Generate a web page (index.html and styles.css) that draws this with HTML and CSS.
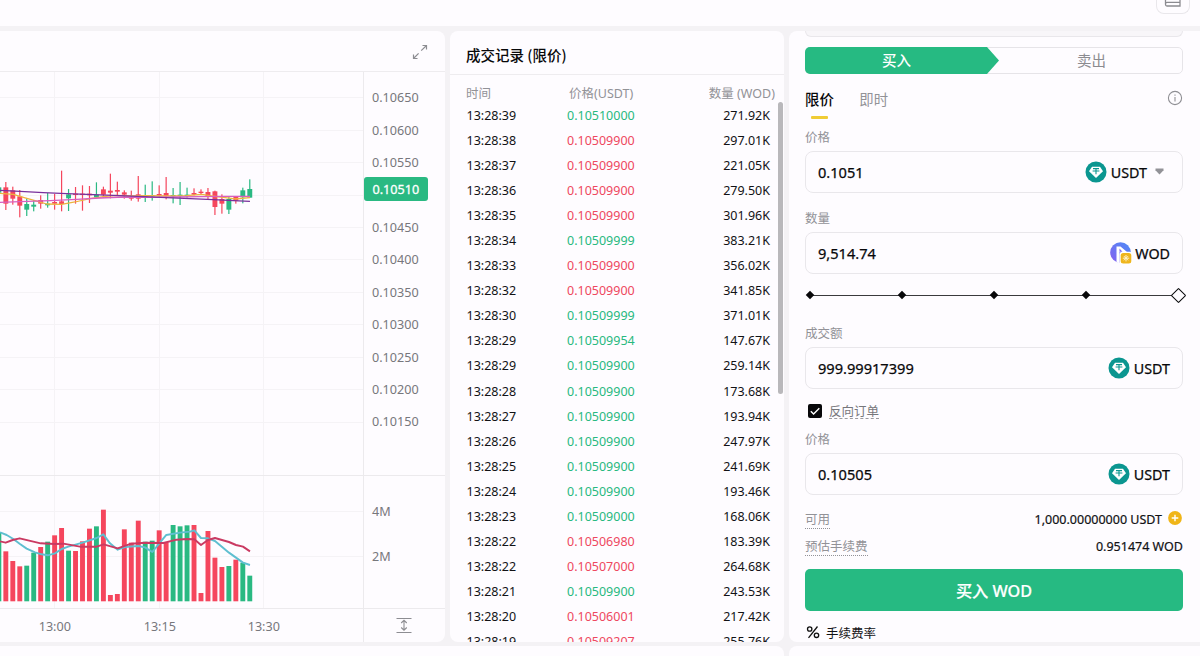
FILE: index.html
```html
<!DOCTYPE html>
<html lang="zh-CN">
<head>
    <meta charset="UTF-8">
    <meta name="viewport" content="width=device-width, initial-scale=1.0">
    <title>WOD/USDT</title>
    <link rel="stylesheet" href="styles.css">
</head>
<body>
    <svg class="defs" width="0" height="0">
        <symbol id="tether" viewBox="0 0 22 22">
            <circle cx="11" cy="11" r="10.5" fill="#0b9690"/>
            <path d="M7 5.7h8l3 4.5-7 6.7-7-6.7z" fill="#fff"/>
            <path d="M8 7.6h6M11 7.6v5.6M7.6 10h6.8" stroke="#0b9690" stroke-width="1.1" fill="none"/>
        </symbol>
    </svg>

    <header class="topbar">
        <div class="layout-button">
            <svg width="18" height="12" viewBox="0 0 18 12" fill="none" stroke="#8b8b90" stroke-width="1.3">
                <path d="M1.5 0v9.5q0 1.5 1.5 1.5h13V0M1.5 9q0-1.6 1.5-1.6h13"/>
            </svg>
        </div>
    </header>

    <main class="panels">
        <section class="panel chart-panel">
            <div class="chart-header">
                <svg width="16" height="16" viewBox="0 0 16 16" fill="none" stroke="#8d8d92" stroke-width="1.2">
                    <path d="M9.2 6.6 14.5 1.5M10.5 1.5h4v4M6.6 9.4 1.5 14.5M1.5 10.5v4h4"/>
                </svg>
            </div>
            <svg id="chart" class="chart" width="445" height="570" viewBox="0 72 445 570"></svg>
        </section>

        <section class="panel trades-panel">
            <h2>成交记录 (限价)</h2>
            <div class="trades-head">
                <span>时间</span>
                <span>价格(USDT)</span>
                <span>数量 (WOD)</span>
            </div>
            <div class="trades-body">
                <div id="trades" class="trades"></div>
                <div class="scrollbar"></div>
            </div>
        </section>

        <section class="panel order-panel">
            <div class="previous-field"></div>
            <div class="side-switch">
                <div class="side-buy">买入</div>
                <div class="side-sell">卖出</div>
            </div>
            <div class="tabs">
                <span class="tab active">限价</span>
                <span class="tab">即时</span>
                <svg class="info" width="16" height="16" viewBox="0 0 16 16" fill="none" stroke="#8f8f94" stroke-width="1.1">
                    <circle cx="8" cy="8" r="6.6"/>
                    <path d="M8 7v4.4M8 4.5v1.3"/>
                </svg>
            </div>

            <div class="label first">价格</div>
            <div class="field">
                <span class="value">0.1051</span>
                <svg class="coin" width="22" height="22"><use href="#tether"/></svg>
                <span class="unit">USDT</span>
                <svg class="caret" width="9" height="7" viewBox="0 0 9 7"><path d="M.5 .5h8v1.7L4.5 6.5 .5 2.2z" fill="#929297"/></svg>
            </div>

            <div class="label">数量</div>
            <div class="field">
                <span class="value">9,514.74</span>
                <svg class="coin wod" width="22" height="22" viewBox="0 0 22 22">
                    <defs>
                        <linearGradient id="wodFill" x1="1" y1="0" x2="0" y2="1">
                            <stop offset="0" stop-color="#4b8cf6"/>
                            <stop offset="1" stop-color="#8760ef"/>
                        </linearGradient>
                    </defs>
                    <circle cx="10.5" cy="10.5" r="10.3" fill="url(#wodFill)"/>
                    <path d="M6.5 4.5h4l6.5 5.5H9.5v11.5L6.500 20z" fill="#fff"/>
                    <path d="M9.5 6.500 12.5 9.700H9.5z" fill="#7a68f0"/>
                    <rect x="9.5" y="9.7" width="13" height="13" rx="3" fill="#fff"/>
                    <rect x="10.7" y="10.9" width="10.6" height="10.6" rx="2.5" fill="#efb51d"/>
                    <path d="M16 13v6.4M12.8 16.2h6.4M13.9 14.1l4.2 4.2M18.1 14.1l-4.2 4.2" stroke="#fff2c9" stroke-width="1"/>
                </svg>
                <span class="unit">WOD</span>
            </div>

            <div class="slider">
                <i></i><i></i><i></i><i></i><i class="handle"></i>
            </div>

            <div class="label amount">成交额</div>
            <div class="field">
                <span class="value">999.99917399</span>
                <svg class="coin" width="22" height="22"><use href="#tether"/></svg>
                <span class="unit">USDT</span>
            </div>

            <div class="check-row">
                <svg width="14" height="14" viewBox="0 0 14 14">
                    <rect width="14" height="14" rx="2" fill="#08080a"/>
                    <path d="M2.8 7.2 5.6 10 11.3 4.3" fill="none" stroke="#fff" stroke-width="1.4"/>
                </svg>
                <span>反向订单</span>
            </div>

            <div class="label reverse">价格</div>
            <div class="field">
                <span class="value">0.10505</span>
                <svg class="coin" width="22" height="22"><use href="#tether"/></svg>
                <span class="unit">USDT</span>
            </div>

            <div class="summary available">
                <span class="hint">可用</span>
                <span class="sum">1,000.00000000 USDT</span>
                <svg width="14" height="14" viewBox="0 0 14 14">
                    <circle cx="7" cy="7" r="6.9" fill="#f0b518"/>
                    <path d="M7 3.7v6.6M3.7 7h6.6" stroke="#fff" stroke-width="1.4"/>
                </svg>
            </div>
            <div class="summary fee">
                <span class="hint">预估手续费</span>
                <span class="sum">0.951474 WOD</span>
            </div>

            <button class="submit">买入 WOD</button>

            <div class="rate">
                <svg width="14" height="14" viewBox="0 0 14 14" fill="none" stroke="#111" stroke-width="1.3">
                    <circle cx="3.7" cy="4" r="2.2"/>
                    <circle cx="10.5" cy="10.3" r="2.2"/>
                    <path d="M11.5 1.5 2.5 12.8"/>
                </svg>
                <span>手续费率</span>
            </div>
        </section>
    </main>

    <footer class="next-panels">
        <div class="next-left"></div>
        <div class="next-right"></div>
    </footer>

    <script src="script.js"></script>
</body>
</html>
```

FILE: styles.css
```css
* {
    box-sizing: border-box;
}
body {
    margin: 0;
    height: 656px;
    overflow: hidden;
    background-color: #f4f2f5;
    color: #121215;
    font-family: "Noto Sans", "Noto Sans CJK SC", sans-serif;
    font-size: 12.5px;
}
svg {
    display: block;
    flex-shrink: 0;
}
.defs {
    position: absolute;
}
.topbar {
    height: 26px;
    margin-bottom: 5px;
    padding-right: 10px;
    display: flex;
    justify-content: flex-end;
    background: #fefcff;
}
.layout-button {
    width: 34px;
    height: 14px;
    border: 1px solid #e9e7eb;
    border-top: none;
    border-radius: 0 0 8px 8px;
    display: flex;
    justify-content: center;
}
.layout-button svg {
    margin-top: -5px;
}
.panels {
    display: grid;
    grid-template-columns: 445px 334px 420px;
    column-gap: 5px;
    height: 611px;
}
.panel {
    height: 611px;
    overflow: hidden;
    background: #fefcff;
    border-radius: 8px;
}

/* chart */
.chart-panel {
    border-radius: 0 8px 8px 0;
}
.chart-header {
    height: 41px;
    padding: 13px 17px 0 0;
    display: flex;
    justify-content: flex-end;
    border-bottom: 1px solid #eeecef;
}
.chart text {
    font-size: 12.6px;
    fill: #77777c;
}
.chart .current {
    fill: #fff;
    stroke: #fff;
    stroke-width: 0.3px;
}
.grid-line {
    stroke: #f5f3f6;
}
.frame-line {
    stroke: #eceaed;
}
.up {
    fill: #2ab982;
}
.down {
    fill: #f5465d;
}
.line {
    fill: none;
    stroke-linejoin: round;
}

/* trades */
.trades-panel {
    display: flex;
    flex-direction: column;
}
h2 {
    margin: 0;
    height: 44px;
    padding: 2px 16px 0;
    line-height: 43px;
    border-bottom: 1px solid #eeecef;
    font-family: "Noto Sans CJK SC", sans-serif;
    font-size: 14.5px;
    font-weight: 500;
    color: #08080a;
}
.trades-head {
    height: 28px;
    padding: 9px 9px 0 16px;
    line-height: 20px;
    display: grid;
    grid-template-columns: 100px 90px 1fr;
    color: #929297;
}
.trades-head span:nth-child(2) {
    padding-left: 3px;
}
.trades-head span:last-child {
    text-align: right;
}
.trades-body {
    flex: 1;
    min-height: 0;
    display: flex;
}
.trades {
    flex: 1;
}
.trade {
    height: 25.06px;
    line-height: 25.4px;
    padding: 0 9px 0 16.5px;
    display: grid;
    grid-template-columns: 100.5px 90px 1fr;
}
.trade span:last-child {
    text-align: right;
}
.price-up {
    color: #28b980;
}
.price-down {
    color: #ee4860;
}
.scrollbar {
    width: 5px;
    height: 292px;
    margin: -1px 1px 0 -1px;
    border-radius: 3px;
    background: #b9b8bb;
}

/* order form */
.order-panel {
    padding: 0 26px 0 16px;
}
.previous-field {
    height: 6px;
    border: 1px solid #e9e7eb;
    border-top: none;
    border-radius: 0 0 8px 8px;
    background: #f8f6f9;
}
.side-switch {
    height: 27px;
    margin-top: 10px;
    display: flex;
    border: 1px solid #e6e4e8;
    border-radius: 5px;
    font-size: 14.5px;
    line-height: 24px;
    text-align: center;
}
.side-buy {
    width: 194px;
    height: 27px;
    margin: -1px 0 0 -1px;
    padding-right: 11px;
    line-height: 27px;
    background: #26ba82;
    border-radius: 5px 0 0 5px;
    clip-path: polygon(0 0, 182px 0, 194px 50%, 182px 100%, 0 100%);
    color: #fff;
    font-weight: 500;
}
.side-sell {
    flex: 1;
    padding-left: 2px;
    color: #8b8b90;
}
.tabs {
    height: 54px;
    padding-top: 16px;
    display: flex;
    gap: 25.5px;
    line-height: 20px;
    font-size: 14.4px;
    color: #929297;
}
.tab.active {
    color: #08080a;
    font-weight: 500;
}
.tab.active::after {
    content: "";
    display: block;
    width: 17px;
    height: 3px;
    margin: 6px auto 0;
    border-radius: 1px;
    background: #f0cc35;
}
.info {
    margin-left: auto;
}
.label {
    height: 18px;
    margin: 16px 0 5px;
    line-height: 20px;
    color: #929297;
}
.label.first {
    margin-top: 0;
}
.label.amount {
    margin-top: 19px;
}
.label.reverse {
    margin-top: 9px;
}
.field {
    height: 42px;
    padding: 0 12px;
    display: flex;
    align-items: center;
    border: 1px solid #e9e7eb;
    border-radius: 8px;
    font-size: 14.6px;
    color: #08080a;
}
.value,
.unit {
    -webkit-text-stroke: 0.25px #08080a;
}
.unit {
    font-size: 14.3px;
}
.coin {
    margin: -1px 4px 0 auto;
}
.coin.wod {
    margin-right: 3px;
}
.caret {
    margin: -2px 6px 0 8px;
}
.slider {
    height: 20px;
    margin: 11px 0 0 2px;
    display: flex;
    align-items: center;
    justify-content: space-between;
    background: linear-gradient(#3a3a3d, #3a3a3d) center / 100% 1px no-repeat;
}
.slider i {
    width: 6px;
    height: 6px;
    background: #08080a;
    transform: rotate(45deg);
}
.slider .handle {
    width: 11px;
    height: 11px;
    margin: 0 -1px 0 -2px;
    background: #fefcff;
    border: 1.5px solid #08080a;
    border-radius: 1px;
}
.check-row {
    height: 20px;
    margin: 12px 0 0 3px;
    display: flex;
    align-items: center;
    gap: 7px;
    color: #77777c;
}
.check-row span {
    height: 15px;
    margin-top: 1px;
    line-height: 15px;
    border-bottom: 1px dashed #9a9a9f;
}
.summary {
    height: 19px;
    display: flex;
    align-items: center;
}
.available {
    margin-top: 15px;
}
.fee {
    margin-top: 8px;
}
.hint {
    height: 18px;
    margin-right: auto;
    line-height: 18px;
    border-bottom: 1px dotted #929297;
    color: #929297;
}
.sum {
    font-size: 12.5px;
    -webkit-text-stroke: 0.2px #121215;
}
.available svg {
    margin: -3px 1px 0 6px;
}
.submit {
    display: block;
    width: 100%;
    height: 42px;
    margin-top: 13px;
    padding: 0;
    border: none;
    border-radius: 5px;
    background-color: #26ba82;
    color: #fff;
    font-family: "Noto Sans", "Noto Sans CJK SC", sans-serif;
    font-size: 16.2px;
    font-weight: 500;
    -webkit-text-stroke: 0.2px #fff;
}
.rate {
    height: 20px;
    margin: 11px 0 0 1px;
    display: flex;
    align-items: center;
    gap: 6px;
}

/* tops of the panels below */
.next-panels {
    margin-top: 4px;
    display: grid;
    grid-template-columns: 784px 416px;
    column-gap: 5px;
}
.next-left,
.next-right {
    height: 20px;
    background: #fefcff;
    border-radius: 0 8px 0 0;
}
.next-right {
    border-radius: 8px 0 0 0;
}
```

FILE: script.js
```js
const STEP = 6.97;
const FIRST_X = -1.14;
const BAR_WIDTH = 4.9;
const VOLUME_BASE = 601.3;

// [up/down, wick top, wick bottom, body top, body bottom, volume top], in thirds of a pixel
const candles = [
    ['u', 78, 100, 82, 98, 126],
    ['d', 66, 150, 82, 131, 184],
    ['d', 80, 134, 91, 116, 213],
    ['d', 90, 172, 109, 137, 229],
    ['u', 115, 168, 132, 149, 227],
    ['u', 120, 154, 134, 140, 188],
    ['d', 106, 146, 120, 131, 171],
    ['u', 99, 143, 131, 136, 155],
    ['d', 102, 149, 126, 131, 136],
    ['d', 32, 154, 124, 132, 114],
    ['u', 87, 153, 103, 115, 182],
    ['d', 81, 131, 101, 105, 183],
    ['d', 76, 152, 101, 105, 154],
    ['d', 78, 129, 101, 106, 116],
    ['u', 67, 112, 104, 112, 109],
    ['d', 80, 113, 88, 104, 59],
    ['d', 41, 115, 92, 98, 315],
    ['d', 65, 106, 90, 95, 312],
    ['d', 91, 116, 97, 104, 118],
    ['d', 92, 122, 112, 116, 158],
    ['d', 48, 125, 103, 116, 92],
    ['u', 74, 126, 107, 110, 155],
    ['u', 64, 122, 106, 109, 152],
    ['d', 76, 110, 102, 107, 121],
    ['d', 51, 118, 99, 108, 157],
    ['u', 84, 130, 105, 109, 105],
    ['u', 66, 135, 104, 108, 109],
    ['u', 83, 113, 104, 108, 106],
    ['d', 85, 106, 99, 104, 105],
    ['d', 88, 105, 95, 99, 309],
    ['d', 84, 119, 96, 109, 123],
    ['d', 92, 165, 94, 141, 203],
    ['d', 103, 161, 117, 131, 231],
    ['u', 110, 162, 117, 149, 228],
    ['d', 108, 131, 111, 122, 209],
    ['u', 83, 130, 91, 112, 218],
    ['u', 58, 113, 87, 113, 257]
];

const lines = [
    ['#edb440', 160, '0,100 40,103 70,112 105,122 140,132 185,133 225,126 270,116 310,110 350,106 400,108 440,107 500,108 560,107 605,103 635,108 670,112 705,117 750,113'],
    ['#d85fc0', 160, '0,127 60,125 150,122 230,118 300,114 370,111 450,112 530,111 600,110 680,109 750,109'],
    ['#79309c', 160, '0,91 60,94 130,98 200,101 280,104 360,107 430,110 500,113 570,116 640,119 700,122 750,124'],
    ['#5fbfd0', 490, '0,127 20,135 40,147 60,162 80,176 105,187 125,193 143,196 165,190 185,177 205,170 248,158 290,144 310,133 330,160 353,179 374,171 415,168 435,172 457,186 478,160 499,135 540,128 570,125 583,121 603,144 624,145 645,153 687,188 729,218 750,225'],
    ['#ca3a62', 490, '0,154 17,158 38,150 59,145 122,160 164,162 190,161 240,170 290,170 311,163 353,175 394,161 436,158 490,159 530,149 560,147 583,148 603,165 624,150 645,144 687,156 708,165 729,170 750,184']
];

let svg = '';
function hline(y, name, x2) {
    svg += `<line class="${name}" x1="0" x2="${x2}" y1="${y}" y2="${y}"/>`;
}
function vline(x, name, y2) {
    svg += `<line class="${name}" x1="${x}" x2="${x}" y1="72" y2="${y2}"/>`;
}

const prices = ['0.10650', '0.10600', '0.10550', null, '0.10450', '0.10400', '0.10350', '0.10300', '0.10250', '0.10200', '0.10150'];
prices.forEach((price, i) => {
    const y = 97.8 + i * 32.43;
    hline(Math.floor(y) + 0.5, 'grid-line', 363);
    if (price) svg += `<text x="372" y="${y + 4.3}">${price}</text>`;
});
[['4M', 511.5], ['2M', 556.5]].forEach(([label, y]) => {
    hline(y, 'grid-line', 363);
    svg += `<text x="372" y="${y + 4.7}">${label}</text>`;
});
[['13:00', 54.5], ['13:15', 159.5], ['13:30', 263.5]].forEach(([label, x]) => {
    vline(x, 'grid-line', 608);
    svg += `<text x="${x + 0.3}" y="631" text-anchor="middle">${label}</text>`;
});
vline(363.5, 'frame-line', 642);
hline(475.5, 'frame-line', 445);
hline(608.5, 'frame-line', 445);

candles.forEach(([dir, wickTop, wickBottom, top, bottom, volume], i) => {
    const x = FIRST_X + i * STEP;
    const name = dir === 'u' ? 'up' : 'down';
    const volumeTop = 490 + volume / 3;
    svg += `<rect class="${name}" x="${x - 0.6}" y="${160 + wickTop / 3}" width="1.2" height="${(wickBottom - wickTop) / 3}"/>`;
    svg += `<rect class="${name}" x="${x - BAR_WIDTH / 2}" y="${160 + top / 3}" width="${BAR_WIDTH}" height="${(bottom - top) / 3}"/>`;
    svg += `<rect class="${name}" x="${x - BAR_WIDTH / 2}" y="${volumeTop}" width="${BAR_WIDTH}" height="${VOLUME_BASE - volumeTop}"/>`;
});

lines.forEach(([color, top, points]) => {
    const width = top === 490 ? 5.8 : 3.8;
    svg += `<polyline class="line" transform="translate(0 ${top}) scale(0.3333)" stroke="${color}" stroke-width="${width}" points="${points}"/>`;
});

svg += '<rect class="up" x="364" y="177" width="64" height="24" rx="3"/>';
svg += '<text class="current" x="372.5" y="194.3">0.10510</text>';
svg += '<path d="M396.5 618.5h15M396.5 632.5h15M404 620.5v9.5M401.2 623 404 620.3 406.8 623M401.2 627.5 404 630.2 406.8 627.5" fill="none" stroke="#8d8d92" stroke-width="1.1"/>';
document.getElementById('chart').innerHTML = svg;

const trades = [
    ['13:28:39', '0.10510000', '271.92K', 'up'],
    ['13:28:38', '0.10509900', '297.01K', 'down'],
    ['13:28:37', '0.10509900', '221.05K', 'down'],
    ['13:28:36', '0.10509900', '279.50K', 'down'],
    ['13:28:35', '0.10509900', '301.96K', 'down'],
    ['13:28:34', '0.10509999', '383.21K', 'up'],
    ['13:28:33', '0.10509900', '356.02K', 'down'],
    ['13:28:32', '0.10509900', '341.85K', 'down'],
    ['13:28:30', '0.10509999', '371.01K', 'up'],
    ['13:28:29', '0.10509954', '147.67K', 'up'],
    ['13:28:29', '0.10509900', '259.14K', 'up'],
    ['13:28:28', '0.10509900', '173.68K', 'up'],
    ['13:28:27', '0.10509900', '193.94K', 'up'],
    ['13:28:26', '0.10509900', '247.97K', 'up'],
    ['13:28:25', '0.10509900', '241.69K', 'up'],
    ['13:28:24', '0.10509900', '193.46K', 'up'],
    ['13:28:23', '0.10509000', '168.06K', 'up'],
    ['13:28:22', '0.10506980', '183.39K', 'down'],
    ['13:28:22', '0.10507000', '264.68K', 'down'],
    ['13:28:21', '0.10509900', '243.53K', 'up'],
    ['13:28:20', '0.10506001', '217.42K', 'down'],
    ['13:28:19', '0.10509207', '255.76K', 'down']
];
document.getElementById('trades').innerHTML = trades.map(([time, price, amount, dir]) => `
    <div class="trade">
        <span>${time}</span>
        <span class="price-${dir}">${price}</span>
        <span>${amount}</span>
    </div>`).join('');
```
